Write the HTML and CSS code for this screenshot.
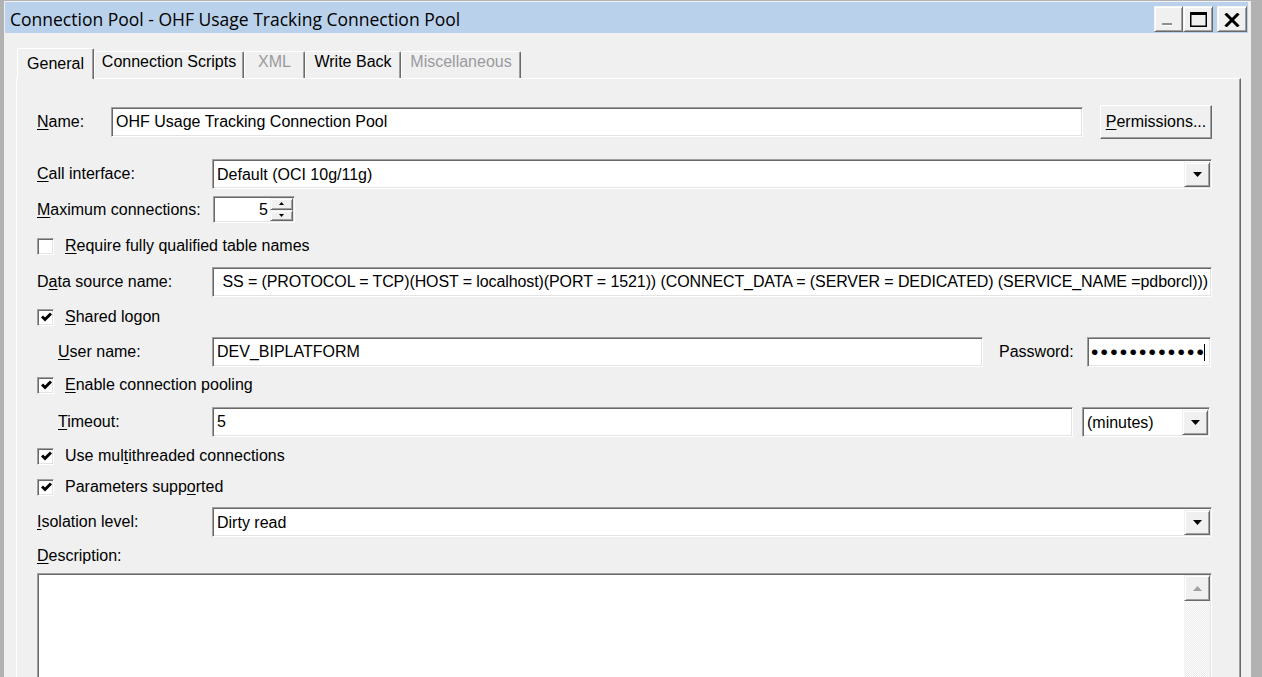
FILE: index.html
```html
<!DOCTYPE html>
<html>
<head>
<meta charset="utf-8">
<title>Connection Pool - OHF Usage Tracking Connection Pool</title>
<link rel="stylesheet" href="styles.css">
</head>
<body>
<div class="window">
  <div class="titlebar">
    <span class="title">Connection Pool - OHF Usage Tracking Connection Pool</span>
    <div class="caption-buttons">
      <div class="cap-btn cap-min"><svg width="11" height="3" viewBox="0 0 11 3"><rect x="0" y="0" width="10" height="2" fill="#8f8f8f"/><rect x="1" y="2" width="10" height="1" fill="#ffffff"/></svg></div>
      <div class="cap-btn cap-max"><svg width="17" height="15" viewBox="0 0 17 15"><rect x="0.75" y="0.75" width="15.5" height="13.5" fill="none" stroke="#000" stroke-width="1.5"/><rect x="0" y="0" width="17" height="3" fill="#000"/></svg></div>
      <div class="cap-btn cap-close"><svg width="16" height="14" viewBox="0 0 16 14"><path d="M1.5 0.5 L14.5 13.5 M14.5 0.5 L1.5 13.5" stroke="#000" stroke-width="3"/></svg></div>
    </div>
  </div>

  <div class="client">
    <div class="tabs">
      <div class="tab tab-active tab-general">General</div>
      <div class="tab tab-scripts">Connection Scripts</div>
      <div class="tab tab-disabled tab-xml">XML</div>
      <div class="tab tab-writeback">Write Back</div>
      <div class="tab tab-disabled tab-misc">Miscellaneous</div>
    </div>

    <div class="panel">
      <div class="row row-name">
        <span class="lbl lbl-name"><u>N</u>ame:</span>
        <div class="edit grow">OHF Usage Tracking Connection Pool</div>
        <div class="btn btn-perm"><span><u>P</u>ermissions...</span></div>
      </div>

      <div class="row gap-20">
        <span class="lbl"><u>C</u>all interface:</span>
        <div class="combo grow">
          <span class="combo-text">Default (OCI 10g/11g)</span>
          <span class="drop-btn"><svg width="9" height="5" viewBox="0 0 9 5"><path d="M0 0H9L4.5 5Z" fill="#000"/></svg></span>
        </div>
      </div>

      <div class="row row-short gap-7">
        <span class="lbl"><u>M</u>aximum connections:</span>
        <div class="spin">
          <span class="spin-val">5</span>
          <span class="spin-btns">
            <span class="spin-b"><svg width="5" height="3" viewBox="0 0 5 3"><path d="M0 3H5L2.5 0Z" fill="#000"/></svg></span>
            <span class="spin-b"><svg width="5" height="3" viewBox="0 0 5 3"><path d="M0 0H5L2.5 3Z" fill="#000"/></svg></span>
          </span>
        </div>
      </div>

      <div class="row gap-8">
        <span class="chk"></span>
        <span><u>R</u>equire fully qualified table names</span>
      </div>

      <div class="row gap-6">
        <span class="lbl">D<u>a</u>ta source name:</span>
        <div class="edit edit-end grow"><span>SS = (PROTOCOL = TCP)(HOST = localhost)(PORT = 1521)) (CONNECT_DATA = (SERVER = DEDICATED) (SERVICE_NAME =pdborcl)))</span></div>
      </div>

      <div class="row gap-5">
        <span class="chk"><svg width="11" height="10" viewBox="0 0 11 10"><path d="M1 4.5 L4 7.5 L10 1.5" fill="none" stroke="#000" stroke-width="3"/></svg></span>
        <span><u>S</u>hared logon</span>
      </div>

      <div class="row gap-5">
        <span class="lbl lbl-sub"><u>U</u>ser name:</span>
        <div class="edit grow">DEV_BIPLATFORM</div>
        <span class="lbl-pwd">Password:</span>
        <div class="edit edit-pwd"><span class="dots">••••••••••••</span><span class="caret"></span></div>
      </div>

      <div class="row gap-3">
        <span class="chk"><svg width="11" height="10" viewBox="0 0 11 10"><path d="M1 4.5 L4 7.5 L10 1.5" fill="none" stroke="#000" stroke-width="3"/></svg></span>
        <span><u>E</u>nable connection pooling</span>
      </div>

      <div class="row gap-7">
        <span class="lbl lbl-sub"><u>T</u>imeout:</span>
        <div class="edit grow">5</div>
        <div class="combo combo-minutes">
          <span class="combo-text">(minutes)</span>
          <span class="drop-btn"><svg width="9" height="5" viewBox="0 0 9 5"><path d="M0 0H9L4.5 5Z" fill="#000"/></svg></span>
        </div>
      </div>

      <div class="row gap-4">
        <span class="chk"><svg width="11" height="10" viewBox="0 0 11 10"><path d="M1 4.5 L4 7.5 L10 1.5" fill="none" stroke="#000" stroke-width="3"/></svg></span>
        <span>Use mul<u>t</u>ithreaded connections</span>
      </div>

      <div class="row gap-1">
        <span class="chk"><svg width="11" height="10" viewBox="0 0 11 10"><path d="M1 4.5 L4 7.5 L10 1.5" fill="none" stroke="#000" stroke-width="3"/></svg></span>
        <span>Parameters supp<u>o</u>rted</span>
      </div>

      <div class="row gap-5">
        <span class="lbl"><u>I</u>solation level:</span>
        <div class="combo grow">
          <span class="combo-text">Dirty read</span>
          <span class="drop-btn"><svg width="9" height="5" viewBox="0 0 9 5"><path d="M0 0H9L4.5 5Z" fill="#000"/></svg></span>
        </div>
      </div>

      <div class="row row-label gap-9">
        <span><u>D</u>escription:</span>
      </div>

      <div class="memo">
        <div class="vscroll">
          <span class="scroll-up"><svg width="9" height="5" viewBox="0 0 9 5"><path d="M0 5H9L4.5 0Z" fill="#a0a0a0"/></svg></span>
          <span class="scroll-track"></span>
        </div>
      </div>
    </div>
  </div>
</div>
</body>
</html>
```

FILE: styles.css
```css
* { box-sizing: border-box; }
html, body { margin: 0; padding: 0; }
body {
  width: 1262px;
  height: 677px;
  overflow: hidden;
  background: #b2b2b2;
  font-family: "Liberation Sans", Arial, sans-serif;
  font-size: 16px;
  color: #000;
}
u { text-decoration: underline; text-decoration-thickness: 1px; text-underline-offset: 2px; }

.window {
  margin: 1px 11px 0 4px;
  height: 676px;
  background: #f0f0f0;
  padding: 1px 3px 0 1px;
  display: flex;
  flex-direction: column;
}

/* title bar */
.titlebar {
  height: 31px;
  flex: none;
  background: #b9d1ea;
  display: flex;
  padding: 0 1px 1px 5px;
}
.title {
  font-family: "Open Sans", "Noto Sans", sans-serif;
  font-size: 17.5px;
  line-height: 24px;
  padding-top: 5px;
  white-space: nowrap;
}
.caption-buttons { margin-left: auto; align-self: flex-end; display: flex; }
.cap-btn {
  width: 30px;
  height: 26px;
  background: #f0f0f0;
  border: 1px solid;
  border-color: #f4f4f4 #696969 #696969 #f4f4f4;
  box-shadow: inset 1px 1px #fff, inset -1px -1px #a0a0a0;
  display: flex;
  align-items: center;
  justify-content: center;
}
.cap-min { width: 29px; align-items: flex-end; justify-content: flex-start; padding: 0 0 5px 7px; }
.cap-close { margin-left: 4px; padding-top: 1px; }

/* client + tabs */
.client { flex: 1; display: flex; flex-direction: column; padding-top: 15px; min-height: 0; }
.tabs { height: 30px; flex: none; display: flex; align-items: flex-end; margin-left: 12px; }
.tab {
  height: 27px;
  padding-top: 1px;
  line-height: 18px;
  text-align: center;
  white-space: nowrap;
  background: #f0f0f0;
  border-top: 1px solid #fff;
  border-left: 1px solid #fff;
  border-right: 1px solid #696969;
  box-shadow: inset -1px 0 #a0a0a0;
  border-radius: 2px 2px 0 0;
}
.tab-active { height: 31px; margin-bottom: -1px; padding-top: 6px; position: relative; z-index: 1; }
.tab-disabled { color: #9a9a9f; }
.tab-general { width: 77px; }
.tab-scripts { width: 150px; }
.tab-xml { width: 61px; }
.tab-writeback { width: 96px; }
.tab-misc { width: 120px; }

.panel {
  flex: 1;
  min-height: 0;
  margin: 0 7px 0 11px;
  border-top: 1px solid #fff;
  border-left: 1px solid #fff;
  border-right: 1px solid #696969;
  box-shadow: inset -1px 0 #a0a0a0;
  padding: 26px 28px 0 20px;
  display: flex;
  flex-direction: column;
}

/* rows */
.row { display: flex; align-items: center; flex: none; height: 30px; white-space: nowrap; }
.row-name { height: 34px; }
.row-short { height: 27px; }
.row-label { height: 20px; }
.gap-1 { margin-top: 1px; }
.gap-3 { margin-top: 3px; }
.gap-4 { margin-top: 4px; }
.gap-5 { margin-top: 5px; }
.gap-6 { margin-top: 6px; }
.gap-7 { margin-top: 7px; }
.gap-8 { margin-top: 8px; }
.gap-9 { margin-top: 9px; }
.gap-20 { margin-top: 20px; }

.lbl { width: 175px; flex: none; }
.lbl-name { width: 74px; }
.lbl-sub { padding-left: 21px; }
.grow { flex: 1; min-width: 0; }

.edit, .combo, .spin, .chk, .memo {
  background: #fff;
  border: 1px solid;
  border-color: #a0a0a0 #fff #fff #a0a0a0;
  box-shadow: inset 1px 1px #696969, inset -1px -1px #e3e3e3;
}
.edit {
  height: 30px;
  padding: 0 4px;
  display: flex;
  align-items: center;
  overflow: hidden;
}
.edit-end { justify-content: flex-end; padding-right: 3px; letter-spacing: -0.1px; }

.lbl-pwd { margin-left: 16px; width: 88px; flex: none; }
.edit-pwd { width: 124px; flex: none; margin-right: 1px; padding-left: 3px; }
.dots { letter-spacing: 2.25px; font-size: 21px; line-height: 20px; }
.caret { display: inline-block; width: 1px; height: 17px; background: #000; margin-left: -2px; }

.combo {
  height: 30px;
  display: flex;
  padding: 2px 1px 1px 4px;
}
.combo-text { flex: 1; display: flex; align-items: center; overflow: hidden; }
.combo-minutes { width: 128px; flex: none; margin-left: 9px; margin-right: 2px; }

.drop-btn, .spin-b, .scroll-up, .btn {
  background: #f0f0f0;
  border: 1px solid;
  border-color: #f0f0f0 #696969 #696969 #f0f0f0;
  box-shadow: inset 1px 1px #fff, inset -1px -1px #a0a0a0;
  display: flex;
  align-items: center;
  justify-content: center;
}
.drop-btn { width: 26px; flex: none; }

.spin {
  width: 82px;
  height: 27px;
  margin-left: 1px;
  display: flex;
  padding: 1px 1px 1px 4px;
}
.spin-val { flex: 1; display: flex; align-items: center; justify-content: flex-end; padding-right: 2px; }
.spin-btns { width: 23px; display: flex; flex-direction: column; }
.spin-b { flex: 1; }

.btn {
  width: 112px;
  height: 34px;
  flex: none;
  margin-left: 17px;
  border-color: #fff #696969 #696969 #fff;
  box-shadow: inset -1px -1px #a0a0a0;
}

.chk {
  width: 17px;
  height: 17px;
  flex: none;
  margin-right: 11px;
  display: flex;
  align-items: center;
  justify-content: center;
  padding-left: 1px;
}

.memo {
  margin-top: 7px;
  flex: 1;
  min-height: 0;
  display: flex;
  justify-content: flex-end;
  padding: 1px 1px 0 0;
  border-bottom-width: 0;
  box-shadow: inset 1px 1px #696969, inset -1px 0 #e3e3e3;
}
.vscroll { width: 26px; display: flex; flex-direction: column; }
.scroll-up { height: 26px; flex: none; }
.scroll-track {
  flex: 1;
  background: repeating-conic-gradient(#fcfcfc 0 25%, #ececec 0 50%) 0 0 / 2px 2px;
}
```
